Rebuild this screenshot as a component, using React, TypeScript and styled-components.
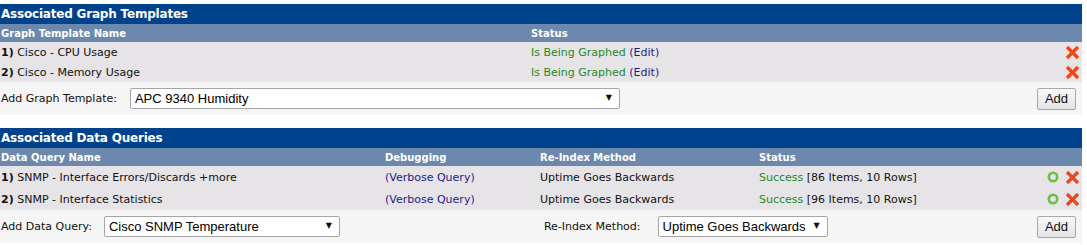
import { FC } from 'react';
import styled, { createGlobalStyle } from 'styled-components';

const GlobalStyle = createGlobalStyle`
	html, body {
		margin: 0;
		padding: 0;
		background: #ffffff;
	}
	body {
		font-family: 'DejaVu Sans', Verdana, sans-serif;
		font-size: 11px;
		color: #000;
	}
`;

const graphTemplates = [
	{ id: 1, name: 'Cisco - CPU Usage' },
	{ id: 2, name: 'Cisco - Memory Usage' },
];

const dataQueries = [
	{ id: 1, name: 'SNMP - Interface Errors/Discards +more', items: 86, rows: 10 },
	{ id: 2, name: 'SNMP - Interface Statistics', items: 96, rows: 10 },
];

const DeleteIcon: FC = () => (
	<svg width="13" height="13" viewBox="0 0 13 13">
		<path d="M2.2 2.2 L10.8 10.8 M10.8 2.2 L2.2 10.8" stroke="#ea4a1c" strokeWidth="3.4" strokeLinecap="square" />
	</svg>
);

const ReloadIcon: FC = () => (
	<svg width="12" height="12" viewBox="0 0 12 12">
		<circle cx="6" cy="6" r="4.2" fill="none" stroke="#6cbf45" strokeWidth="2.6" />
	</svg>
);

const App: FC = () => {
	return (
		<Page>
			<GlobalStyle />
			<Panel>
				<TitleBar>Associated Graph Templates</TitleBar>
				<HeaderRow $cols="530px 1fr 40px">
					<span>Graph Template Name</span>
					<span>Status</span>
					<span />
				</HeaderRow>
				{graphTemplates.map((g) => (
					<DataRow key={g.id} $cols="530px 1fr 40px" $height={20}>
						<span>
							<b>{g.id})</b> {g.name}
						</span>
						<span>
							<Good>Is Being Graphed</Good> <LinkText>(Edit)</LinkText>
						</span>
						<Actions>
							<DeleteIcon />
						</Actions>
					</DataRow>
				))}
				<AddRow>
					<Label>Add Graph Template:</Label>
					<SelectBox $width={490} $gap={13}>
						<Select defaultValue="apc">
							<option value="apc">APC 9340 Humidity</option>
						</Select>
						<Arrow>▼</Arrow>
					</SelectBox>
					<Spacer />
					<AddButton>Add</AddButton>
				</AddRow>
			</Panel>

			<Panel>
				<TitleBar>Associated Data Queries</TitleBar>
				<HeaderRow $cols="384px 155px 219px 1fr 50px">
					<span>Data Query Name</span>
					<span>Debugging</span>
					<span>Re-Index Method</span>
					<span>Status</span>
					<span />
				</HeaderRow>
				{dataQueries.map((q) => (
					<DataRow key={q.id} $cols="384px 155px 219px 1fr 50px" $height={22}>
						<span>
							<b>{q.id})</b> {q.name}
						</span>
						<span>
							<LinkText>(Verbose Query)</LinkText>
						</span>
						<span>Uptime Goes Backwards</span>
						<span>
							<Good>Success</Good> [{q.items} Items, {q.rows} Rows]
						</span>
						<Actions>
							<ReloadIcon />
							<DeleteIcon />
						</Actions>
					</DataRow>
				))}
				<AddRow>
					<Label>Add Data Query:</Label>
					<SelectBox $width={236} $gap={12}>
						<Select defaultValue="cisco">
							<option value="cisco">Cisco SNMP Temperature</option>
						</Select>
						<Arrow>▼</Arrow>
					</SelectBox>
					<ReindexLabel>Re-Index Method:</ReindexLabel>
					<SelectBox $width={170} $gap={17}>
						<Select defaultValue="uptime">
							<option value="uptime">Uptime Goes Backwards</option>
						</Select>
						<Arrow>▼</Arrow>
					</SelectBox>
					<Spacer />
					<AddButton>Add</AddButton>
				</AddRow>
			</Panel>
		</Page>
	);
};

const Page = styled.div`
	padding-top: 4px;
	width: 1082px;
	display: flex;
	flex-direction: column;
	gap: 13px;
`;

const Panel = styled.div`
	display: flex;
	flex-direction: column;
`;

const TitleBar = styled.div`
	height: 20px;
	line-height: 21px;
	background: #00438c;
	color: #ffffff;
	font-weight: bold;
	font-size: 12px;
	letter-spacing: -0.2px;
	padding-left: 1px;
`;

const HeaderRow = styled.div<{ $cols: string }>`
	display: grid;
	grid-template-columns: ${(p) => p.$cols};
	align-items: center;
	height: 18px;
	background: #6d88ad;
	color: #ffffff;
	font-weight: bold;
	font-size: 10px;
	padding-left: 1px;
`;

const DataRow = styled.div<{ $cols: string; $height: number }>`
	display: grid;
	grid-template-columns: ${(p) => p.$cols};
	align-items: center;
	height: ${(p) => p.$height}px;
	background: #e7e4e8;
	font-size: 11px;
	padding-left: 1px;
	color: #111;
	white-space: nowrap;
`;

const Good = styled.span`
	color: #1f8a1f;
`;

const LinkText = styled.span`
	color: #1b1b8f;
`;

const Actions = styled.span`
	display: flex;
	justify-content: flex-end;
	align-items: center;
	gap: 7px;
	padding-right: 3px;
`;

const AddRow = styled.div`
	display: flex;
	align-items: center;
	height: 33px;
	background: #f5f5f5;
	padding: 0 6px 0 1px;
	font-size: 11px;
	color: #111;
`;

const Label = styled.span`
	white-space: nowrap;
`;

const ReindexLabel = styled.span`
	margin-left: 204px;
	white-space: nowrap;
`;

const SelectBox = styled.div<{ $width: number; $gap: number }>`
	position: relative;
	width: ${(p) => p.$width}px;
	height: 21px;
	margin-left: ${(p) => p.$gap}px;
`;

const Select = styled.select`
	appearance: none;
	width: 100%;
	height: 100%;
	box-sizing: border-box;
	border: 1px solid #a6a6a6;
	border-radius: 2px;
	background: #ffffff;
	font-family: 'Liberation Sans', Arial, sans-serif;
	font-size: 13px;
	color: #000;
	padding: 0 0 0 4px;
	outline: none;
`;

const Arrow = styled.span`
	position: absolute;
	right: 8px;
	top: 5px;
	font-size: 8px;
	color: #111;
	pointer-events: none;
	font-family: 'DejaVu Sans', sans-serif;
`;

const Spacer = styled.span`
	flex: 1;
`;

const AddButton = styled.button`
	height: 22px;
	width: 39px;
	box-sizing: border-box;
	border: 1px solid #a8a8a8;
	border-radius: 2px;
	background: linear-gradient(#f8f8f8, #e4e4e4);
	font-family: 'Liberation Sans', Arial, sans-serif;
	font-size: 13px;
	color: #111;
	padding: 0;
`;

export default App;
